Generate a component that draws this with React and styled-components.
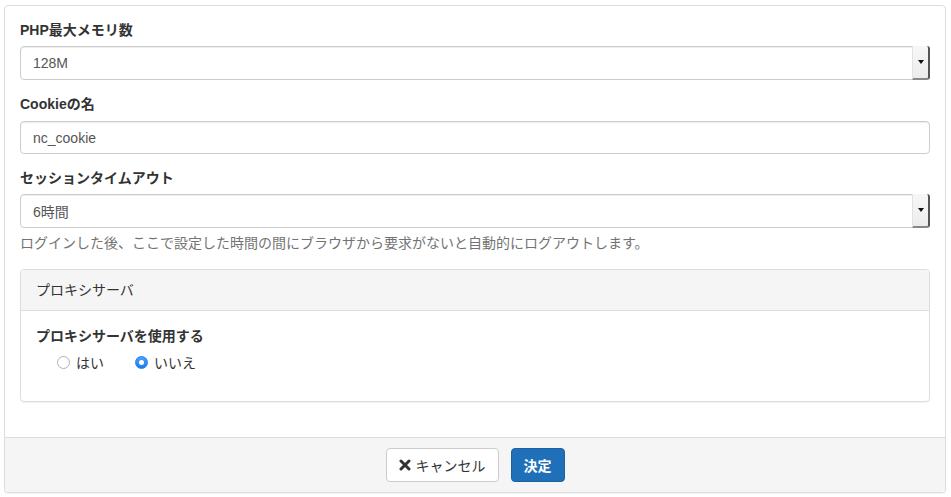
import React from 'react';
import styled, { createGlobalStyle } from 'styled-components';

const GlobalStyle = createGlobalStyle`
  body {
    margin: 0;
    background: #fff;
    font-family: "Liberation Sans", "Noto Sans CJK JP", sans-serif;
    font-size: 14px;
    color: #333;
  }
`;

const Page = styled.div`
  padding: 5px 5px 4px 4px;
`;

const Panel = styled.div`
  border: 1px solid #ddd;
  border-radius: 4px;
  background: #fff;
  box-shadow: 0 1px 1px rgba(0, 0, 0, 0.05);
  overflow: hidden;
`;

const Body = styled.div`
  padding: 14px 15px 15px;
`;

const Group = styled.div`
  margin-bottom: ${(p) => (p.$tight ? '0' : '14px')};
`;

const Label = styled.div`
  font-weight: bold;
  line-height: 20px;
  margin-bottom: ${(p) => (p.$gap ? p.$gap : '5px')};
  color: #333;
`;

const Field = styled.div`
  display: flex;
  align-items: stretch;
  height: ${(p) => (p.$short ? '33px' : '34px')};
  box-sizing: border-box;
  border: 1px solid #ccc;
  border-radius: 4px;
  background: #fff;
  box-shadow: inset 0 1px 1px rgba(0, 0, 0, 0.075);
  color: #555;
`;

const Value = styled.div`
  flex: 1;
  padding: 0 12px;
  display: flex;
  align-items: center;
`;

const ArrowBox = styled.div`
  width: 15px;
  display: flex;
  align-items: center;
  justify-content: center;
  background: linear-gradient(#f7f7f7, #ececec);
  border-left: 1px solid #e2e2e2;
  border-right: 2px solid #555;
  border-bottom: 2px solid #888;
  margin: -1px -1px -1px 0;
  border-radius: 0 3px 3px 0;
`;

const Caret = styled.span`
  width: 0;
  height: 0;
  border-left: 3px solid transparent;
  border-right: 3px solid transparent;
  border-top: 4px solid #111;
`;

const Help = styled.div`
  margin-top: 5px;
  padding-bottom: 2px;
  line-height: 20px;
  color: #737373;
`;

const SubPanel = styled.div`
  border: 1px solid #ddd;
  border-radius: 4px;
  margin-bottom: 20px;
  box-shadow: 0 1px 1px rgba(0, 0, 0, 0.05);
  overflow: hidden;
`;

const SubHeading = styled.div`
  padding: 10px 15px;
  line-height: 20px;
  background: #f5f5f5;
  border-bottom: 1px solid #ddd;
  color: #333;
`;

const SubBody = styled.div`
  padding: 15px 15px 16px;
`;

const RadioRow = styled.div`
  display: flex;
  align-items: center;
  height: 22px;
  margin-left: 21px;
  margin-bottom: 12px;
`;

const RadioOption = styled.label`
  display: flex;
  align-items: center;
  gap: 6px;
  margin-right: 31px;
  color: #333;
`;

const RadioDot = styled.span`
  width: 13px;
  height: 13px;
  box-sizing: border-box;
  border-radius: 50%;
  display: flex;
  align-items: center;
  justify-content: center;
  border: ${(p) => (p.$on ? '1px solid #1f7ff0' : '1px solid #b2b2b2')};
  background: ${(p) => (p.$on ? 'linear-gradient(#4ca2fb, #1a7df2)' : '#fff')};

  &::after {
    content: "";
    width: 5px;
    height: 5px;
    border-radius: 50%;
    background: #fff;
    display: ${(p) => (p.$on ? 'block' : 'none')};
  }
`;

const Footer = styled.div`
  display: flex;
  justify-content: center;
  gap: 12px;
  padding: 10px 15px;
  background: #f5f5f5;
  border-top: 1px solid #ddd;
`;

const Button = styled.button`
  display: flex;
  align-items: center;
  gap: 5px;
  height: 34px;
  padding: 0 12px;
  font-family: inherit;
  font-size: 14px;
  border-radius: 4px;
  cursor: pointer;
  border: 1px solid ${(p) => (p.$primary ? '#1a62a3' : '#ccc')};
  background: ${(p) => (p.$primary ? '#1f70b8' : '#fff')};
  color: ${(p) => (p.$primary ? '#fff' : '#333')};
  font-weight: ${(p) => (p.$primary ? 'bold' : 'normal')};
`;

const TimesIcon = () => (
  <svg width="12" height="12" viewBox="0 0 12 12">
    <path d="M2 2 L10 10 M10 2 L2 10" stroke="#333" strokeWidth="3" strokeLinecap="round" />
  </svg>
);

const Select = ({ value }) => (
  <Field>
    <Value>{value}</Value>
    <ArrowBox>
      <Caret />
    </ArrowBox>
  </Field>
);

const App = () => (
  <Page>
    <GlobalStyle />
    <Panel>
      <Body>
        <Group>
          <Label $gap="6px">PHP最大メモリ数</Label>
          <Select value="128M" />
        </Group>
        <Group>
          <Label $gap="7px">Cookieの名</Label>
          <Field $short>
            <Value>nc_cookie</Value>
          </Field>
        </Group>
        <Group>
          <Label $gap="6px">セッションタイムアウト</Label>
          <Select value="6時間" />
          <Help>ログインした後、ここで設定した時間の間にブラウザから要求がないと自動的にログアウトします。</Help>
        </Group>
        <Group $tight>
          <SubPanel>
            <SubHeading>プロキシサーバ</SubHeading>
            <SubBody>
              <Label>プロキシサーバを使用する</Label>
              <RadioRow>
                <RadioOption>
                  <RadioDot />
                  はい
                </RadioOption>
                <RadioOption>
                  <RadioDot $on />
                  いいえ
                </RadioOption>
              </RadioRow>
            </SubBody>
          </SubPanel>
        </Group>
      </Body>
      <Footer>
        <Button>
          <TimesIcon />
          キャンセル
        </Button>
        <Button $primary>決定</Button>
      </Footer>
    </Panel>
  </Page>
);

export default App;
